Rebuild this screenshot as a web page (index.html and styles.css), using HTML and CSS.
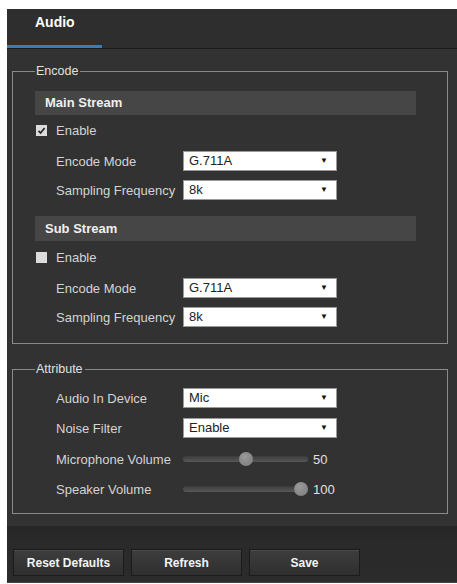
FILE: index.html
```html
<!DOCTYPE html>
<html lang="en">
<head>
  <meta charset="UTF-8">
  <title>Audio</title>
  <link rel="stylesheet" href="styles.css">
</head>
<body>
  <div class="panel">
    <div class="tabs">
      <div class="tab">Audio</div>
    </div>

    <div class="content">
      <fieldset class="group encode">
        <legend>Encode</legend>

        <div class="bar">Main Stream</div>
        <div class="check-row">
          <span class="check checked">
            <svg width="11" height="11" viewBox="0 0 11 11"><path d="M2.5 5.8 L4.6 8 L8.6 3" fill="none" stroke="#2a2a2a" stroke-width="1.8"/></svg>
          </span>
          <span class="check-label">Enable</span>
        </div>
        <div class="row first">
          <span class="label">Encode Mode</span>
          <div class="select">G.711A<span class="arrow">&#9660;</span></div>
        </div>
        <div class="row">
          <span class="label">Sampling Frequency</span>
          <div class="select">8k<span class="arrow">&#9660;</span></div>
        </div>

        <div class="bar sub">Sub Stream</div>
        <div class="check-row">
          <span class="check"></span>
          <span class="check-label">Enable</span>
        </div>
        <div class="row first">
          <span class="label">Encode Mode</span>
          <div class="select">G.711A<span class="arrow">&#9660;</span></div>
        </div>
        <div class="row">
          <span class="label">Sampling Frequency</span>
          <div class="select">8k<span class="arrow">&#9660;</span></div>
        </div>
      </fieldset>

      <fieldset class="group attribute">
        <legend>Attribute</legend>

        <div class="row first">
          <span class="label">Audio In Device</span>
          <div class="select">Mic<span class="arrow">&#9660;</span></div>
        </div>
        <div class="row">
          <span class="label">Noise Filter</span>
          <div class="select">Enable<span class="arrow">&#9660;</span></div>
        </div>
        <div class="row slider-row">
          <span class="label">Microphone Volume</span>
          <div class="track"><span class="thumb" style="left: 50%;"></span></div>
          <span class="value">50</span>
        </div>
        <div class="row slider-row">
          <span class="label">Speaker Volume</span>
          <div class="track"><span class="thumb end" style="left: 100%;"></span></div>
          <span class="value">100</span>
        </div>
      </fieldset>
    </div>

    <div class="footer">
      <button class="btn">Reset Defaults</button>
      <button class="btn">Refresh</button>
      <button class="btn">Save</button>
    </div>
  </div>
</body>
</html>
```

FILE: styles.css
```css
body {
  margin: 0;
  padding: 0;
  background: #fff;
  font-family: "Liberation Sans", Arial, sans-serif;
  font-size: 13px;
  color: #d4d4d4;
}

.panel {
  margin: 9px 0 0 7px;
  width: 450px;
  height: 574px;
  background: #323232;
  display: flex;
  flex-direction: column;
}

/* header tab */
.tabs {
  height: 40px;
  background: #2e2e2e;
  border-bottom: 1px solid #1c1c1c;
  box-sizing: border-box;
}

.tab {
  width: 67px;
  height: 34px;
  padding: 2px 0 0 28px;
  font-size: 14px;
  font-weight: bold;
  line-height: 22px;
  color: #fff;
  border-bottom: 3px solid #3f7bb3;
}

.content {
  padding: 0 2px 0 5px;
}

/* groups */
.group {
  margin: 16px 0 0 0;
  padding: 0 0 16px 22px;
  border: 1px solid #8a8a8a;
  width: 436px;
  box-sizing: border-box;
  min-width: 0;
}

.group legend {
  margin-left: 0;
  padding: 0 2px 0 1px;
  font-size: 12.5px;
  line-height: 13px;
  color: #e0e0e0;
}

.attribute {
  margin-top: 19px;
  padding-bottom: 14px;
}

.bar {
  margin-top: 13px;
  width: 381px;
  height: 24px;
  line-height: 24px;
  padding-left: 10px;
  box-sizing: border-box;
  background: #464646;
  font-weight: bold;
  color: #f0f0f0;
}

.bar.sub {
  margin-top: 16px;
  height: 25px;
  line-height: 25px;
}

.check-row {
  display: flex;
  align-items: center;
  height: 16px;
  margin-top: 7px;
}

.bar.sub + .check-row {
  margin-top: 8px;
}

.check {
  width: 11px;
  height: 11px;
  margin-left: 1px;
  background: #dcdcdc;
  display: flex;
}

.check-label {
  margin-left: 9px;
}

.row {
  display: flex;
  align-items: center;
  height: 20px;
  margin-top: 9px;
  padding-left: 21px;
}

.row.first {
  margin-top: 13px;
}

.attribute .row.first {
  margin-top: 12px;
}

.attribute .row {
  margin-top: 10px;
}

.attribute .slider-row {
  margin-top: 11px;
}

.attribute .slider-row + .slider-row {
  margin-top: 10px;
}

.label {
  width: 127px;
  flex: none;
  white-space: nowrap;
}

.select {
  width: 154px;
  height: 20px;
  box-sizing: border-box;
  border: 1px solid #9a9a9a;
  background: #fff;
  color: #222;
  padding-left: 5px;
  line-height: 18px;
  font-size: 13px;
  position: relative;
}

.select .arrow {
  position: absolute;
  right: 8px;
  top: 0;
  font-size: 8px;
  color: #111;
}

/* sliders */
.track {
  position: relative;
  width: 125px;
  height: 6px;
  border-radius: 3px;
  background: linear-gradient(#3c3c3c, #575757);
}

.thumb {
  position: absolute;
  top: -4px;
  width: 14px;
  height: 14px;
  margin-left: -7px;
  border-radius: 50%;
  background: radial-gradient(circle at 40% 35%, #9a9a9a, #7a7a7a);
}

.thumb.end {
  margin-left: -14px;
}

.value {
  margin-left: 5px;
  color: #e0e0e0;
}

/* footer buttons */
.footer {
  margin-top: auto;
  height: 57px;
  box-sizing: border-box;
  padding: 23px 0 0 6px;
  background: linear-gradient(#262626, #2a2a2a 15px, #2b2b2b);
  border-bottom: 1px solid #444;
  display: flex;
  gap: 7px;
  align-items: flex-start;
}

.btn {
  width: 111px;
  height: 27px;
  font-family: "Liberation Sans", Arial, sans-serif;
  font-size: 12px;
  font-weight: bold;
  color: #f4f4f4;
  background: linear-gradient(#3d3d3d, #2f2f2f);
  border: 1px solid #1b1b1b;
  box-shadow: inset 0 1px 0 #4a4a4a;
  padding: 0;
}
```
